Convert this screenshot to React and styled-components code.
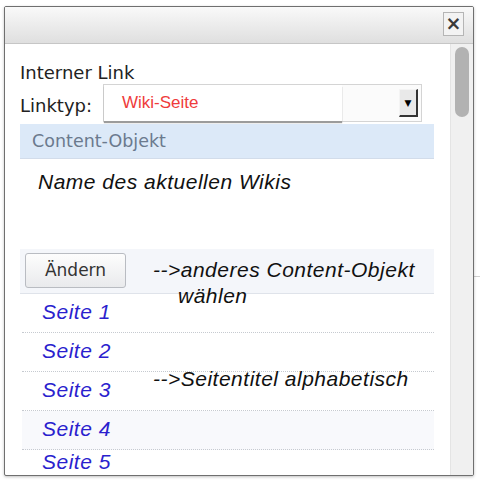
import React from 'react';
import styled, { createGlobalStyle } from 'styled-components';

const GlobalStyle = createGlobalStyle`
  * { box-sizing: border-box; }
  html, body {
    margin: 0;
    padding: 0;
    background: #ffffff;
    font-family: "DejaVu Sans", Verdana, sans-serif;
  }
`;

const Page = styled.div`
  display: flex;
  align-items: flex-start;
  width: 480px;
  height: 486px;
  overflow: hidden;
  padding: 6px 0 0 4px;
`;

const Dialog = styled.div`
  width: 470px;
  height: 470px;
  flex-shrink: 0;
  border: 1px solid #6f6f6f;
  border-radius: 2px;
  background: #ffffff;
  box-shadow: 0 1px 3px rgba(0, 0, 0, 0.25);
  display: flex;
  flex-direction: column;
  overflow: hidden;
  position: relative;
  z-index: 1;
`;

const TitleBar = styled.div`
  height: 37px;
  flex-shrink: 0;
  border-bottom: 1px solid #c6c6c6;
  background: linear-gradient(#f9f9f9, #dfdfdf);
  display: flex;
  justify-content: flex-end;
  align-items: flex-start;
  padding: 5px 9px 0 0;
`;

const CloseButton = styled.div`
  width: 21px;
  height: 24px;
  border: 1px solid #b5b5b5;
  background: #f3f3f3;
  color: #3a3a3a;
  font-size: 19px;
  font-weight: bold;
  line-height: 21px;
  text-align: center;
`;

const Body = styled.div`
  flex: 1;
  display: flex;
  min-height: 0;
`;

const Content = styled.div`
  flex: 1;
  padding: 18px 16px 0 15px;
  overflow: hidden;
  color: #222;
`;

const Scrollbar = styled.div`
  width: 23px;
  flex-shrink: 0;
  background: #f0f0f0;
  border-left: 1px solid #e4e4e4;
  padding: 3px 4px 0 4px;
`;

const Thumb = styled.div`
  height: 70px;
  border-radius: 7px;
  background: #b2b2b2;
`;

const Heading = styled.div`
  font-size: 18px;
  line-height: 22px;
  height: 22px;
`;

const LinkRow = styled.div`
  display: flex;
  align-items: flex-start;
  height: 39px;
`;

const Label = styled.div`
  width: 83px;
  padding-top: 11px;
  font-size: 18px;
  line-height: 22px;
`;

const Select = styled.div`
  width: 319px;
  height: 38px;
  border: 1px solid #d4d4d4;
  background: #fbfbfb;
  display: flex;
  align-items: center;
`;

const SelectValue = styled.div`
  width: 238px;
  height: 36px;
  background: #ffffff;
  box-shadow: 0 2px 1px #9c9c9c;
  padding-left: 18px;
  color: #ef3b3b;
  font-family: "Liberation Sans", Arial, sans-serif;
  font-size: 17px;
  line-height: 36px;
`;

const ArrowButton = styled.div`
  margin-left: auto;
  margin-right: 3px;
  width: 19px;
  height: 28px;
  background: #e9e9e9;
  border-top: 1px solid #f4f4f4;
  border-left: 1px solid #f4f4f4;
  border-right: 2px solid #333;
  border-bottom: 2px solid #333;
  display: flex;
  align-items: center;
  justify-content: center;
  font-size: 9px;
  color: #000;
`;

const SectionBar = styled.div`
  height: 35px;
  margin-top: 1px;
  background: #dce9f8;
  border-bottom: 1px solid #d2dcea;
  color: #6b7a8e;
  font-size: 17.5px;
  line-height: 35px;
  padding-left: 12px;
`;

const Italic = styled.span`
  font-family: "Liberation Sans", Arial, sans-serif;
  font-style: italic;
  font-size: 21px;
  letter-spacing: 0.5px;
  line-height: 24px;
  color: ${(p) => p.color || '#111'};
`;

const NameBlock = styled.div`
  height: 90px;
  padding: 11px 0 0 18px;
`;

const ActionRow = styled.div`
  height: 45px;
  background: #f4f6fa;
  border-bottom: 1px solid #dfe3ea;
  display: flex;
  align-items: flex-start;
  padding: 4px 0 0 5px;
`;

const ChangeButton = styled.div`
  width: 101px;
  height: 35px;
  border: 1px solid #b9bcc2;
  border-radius: 3px;
  background: linear-gradient(#fdfdfd, #e9eaec);
  color: #333;
  font-size: 17px;
  line-height: 33px;
  text-align: center;
`;

const Note = styled.div`
  margin: 4px 0 0 27px;
  height: 26px;
  position: relative;
  z-index: 2;
  display: flex;
  flex-direction: column;
  white-space: nowrap;
`;

const NoteLine = styled(Italic)`
  display: block;
  line-height: 26px;
  padding-left: ${(p) => p.indent || 0}px;
`;

const List = styled.div`
  position: relative;
`;

const PageRow = styled.div`
  height: 39px;
  margin: 0 0 0 2px;
  border-bottom: 1px dotted #c6cad0;
  padding: ${(p) => (p.tight ? 0 : 6)}px 0 0 20px;
  background: ${(p) => p.shade || 'transparent'};
`;

const PageLink = styled(Italic)`
  color: #2b1fce;
`;

const ListNote = styled(Italic)`
  position: absolute;
  left: 133px;
  top: 73px;
  white-space: nowrap;
`;

const Behind = styled.div`
  width: 6px;
  flex-shrink: 0;
  padding-top: 270px;
`;

const BehindRule = styled.div`
  height: 1px;
  background: #d0d0d0;
`;

const pages = ['Seite 1', 'Seite 2', 'Seite 3', 'Seite 4', 'Seite 5'];

export default function App() {
  return (
    <>
      <GlobalStyle />
      <Page>
        <Dialog>
          <TitleBar>
            <CloseButton>×</CloseButton>
          </TitleBar>
          <Body>
            <Content>
              <Heading>Interner Link</Heading>
              <LinkRow>
                <Label>Linktyp:</Label>
                <Select>
                  <SelectValue>Wiki-Seite</SelectValue>
                  <ArrowButton>▼</ArrowButton>
                </Select>
              </LinkRow>
              <SectionBar>Content-Objekt</SectionBar>
              <NameBlock>
                <Italic>Name des aktuellen Wikis</Italic>
              </NameBlock>
              <ActionRow>
                <ChangeButton>Ändern</ChangeButton>
                <Note>
                  <NoteLine>--&gt;anderes Content-Objekt</NoteLine>
                  <NoteLine indent={25}>wählen</NoteLine>
                </Note>
              </ActionRow>
              <List>
                {pages.map((p, i) => (
                  <PageRow
                    key={p}
                    tight={i === pages.length - 1}
                    shade={i === 3 ? '#f8f9fc' : undefined}
                  >
                    <PageLink>{p}</PageLink>
                  </PageRow>
                ))}
                <ListNote>--&gt;Seitentitel alphabetisch</ListNote>
              </List>
            </Content>
            <Scrollbar>
              <Thumb />
            </Scrollbar>
          </Body>
        </Dialog>
        <Behind>
          <BehindRule />
        </Behind>
      </Page>
    </>
  );
}
